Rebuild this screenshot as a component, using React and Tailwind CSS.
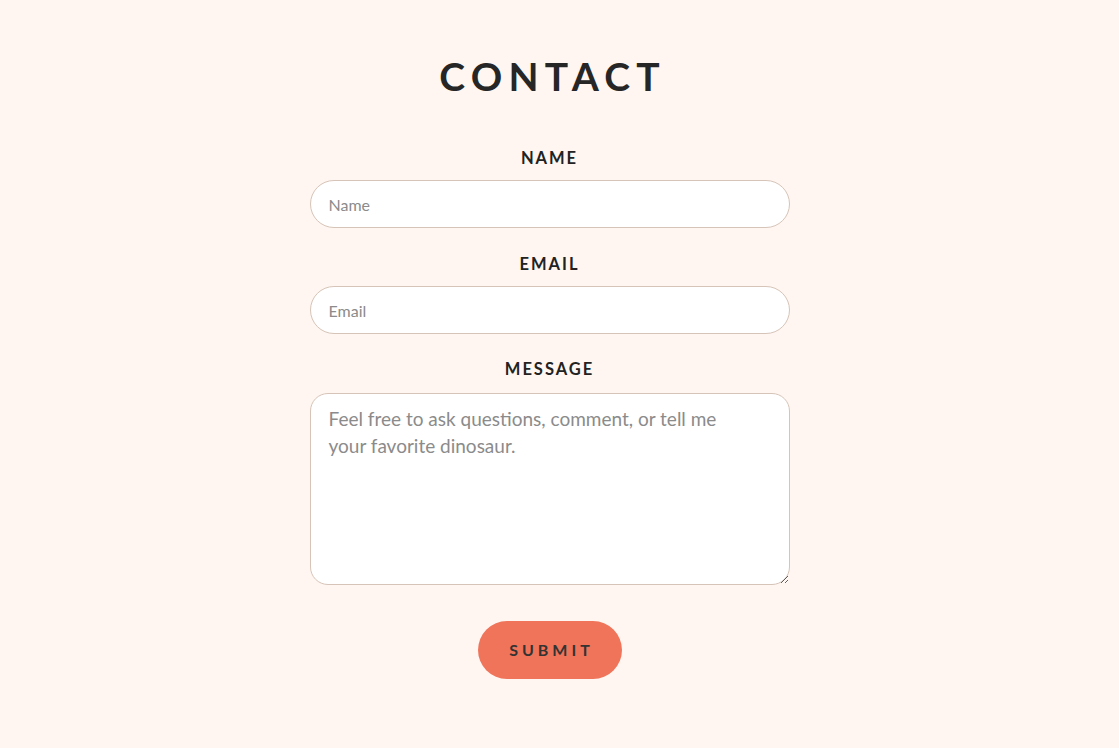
const labelClass =
  "block text-center text-[16.5px] leading-6 font-bold tracking-[0.12em] text-[#222] uppercase";

const inputClass =
  "w-full h-[48px] rounded-full border border-[#d6c4b8] bg-white px-[18px] text-[16px] text-[#333] placeholder:text-[#8b8b8b] outline-none";

export default function App() {
  return (
    <div
      className="min-h-[748px] bg-[#fff6f1] flex flex-col items-center pt-[52px] pr-[20px]"
      style={{ fontFamily: "Lato, 'Open Sans', sans-serif" }}
    >
      <h1 className="text-[39px] leading-[48px] font-bold tracking-[0.16em] text-[#262626] pl-[0.16em]">
        CONTACT
      </h1>

      <form className="w-[480px] mt-[46px] flex flex-col">
        <label className={labelClass}>Name</label>
        <input placeholder="Name" className={`${inputClass} mt-[10px]`} />

        <label className={`${labelClass} mt-[24px]`}>Email</label>
        <input placeholder="Email" className={`${inputClass} mt-[10px]`} />

        <label className={`${labelClass} mt-[23px]`}>Message</label>
        <textarea
          placeholder="Feel free to ask questions, comment, or tell me your favorite dinosaur."
          className="mt-[12px] w-full h-[192px] rounded-[18px] border border-[#d6c4b8] bg-white pl-[18px] pr-[50px] py-[11px] text-[19px] leading-[27px] text-[#333] placeholder:text-[#8b8b8b] outline-none"
        />

        <div className="flex justify-center mt-[36px]">
          <button
            type="button"
            className="w-[144px] h-[58px] rounded-full bg-[#ef745a] text-[#333] text-[16px] font-bold tracking-[0.25em] pl-[0.25em]"
          >
            SUBMIT
          </button>
        </div>
      </form>
    </div>
  );
}
